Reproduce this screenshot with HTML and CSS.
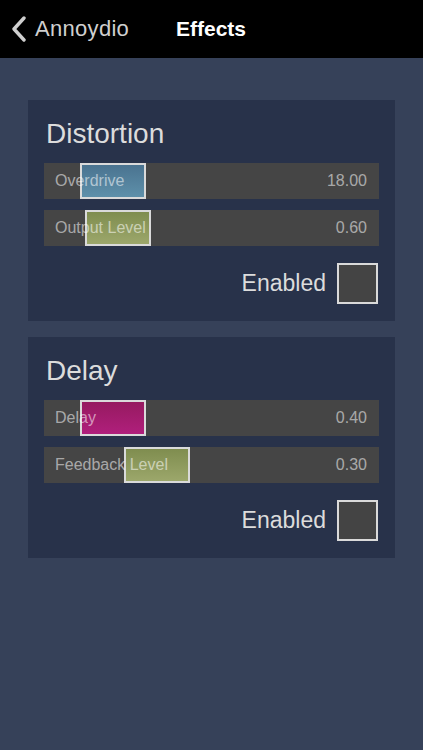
FILE: index.html
```html
<!DOCTYPE html>
<html lang="en">

<head>
  <meta charset="UTF-8">
  <meta name="viewport" content="width=device-width, initial-scale=1.0">
  <title>Effects</title>
  <link rel="stylesheet" href="styles.css">
</head>

<body>
  <header class="navbar">
    <a class="back" href="#">
      <svg class="chevron" width="16" height="26" viewBox="0 0 16 26">
        <polyline points="13,2 3,13 13,24" fill="none" stroke="#cfcfcf" stroke-width="3.4" stroke-linecap="round" stroke-linejoin="round"/>
      </svg>
      <span>Annoydio</span>
    </a>
    <div class="title">Effects</div>
  </header>

  <main class="effects">
    <section class="panel">
      <h2>Distortion</h2>
      <div class="slider">
        <div class="thumb blue" style="left: 36px"></div>
        <span class="label">Overdrive</span>
        <span class="value">18.00</span>
      </div>
      <div class="slider">
        <div class="thumb olive" style="left: 41px"></div>
        <span class="label">Output Level</span>
        <span class="value">0.60</span>
      </div>
      <div class="enabled">
        <span>Enabled</span>
        <div class="checkbox"></div>
      </div>
    </section>

    <section class="panel">
      <h2>Delay</h2>
      <div class="slider">
        <div class="thumb magenta" style="left: 36px"></div>
        <span class="label">Delay</span>
        <span class="value">0.40</span>
      </div>
      <div class="slider">
        <div class="thumb olive" style="left: 80px"></div>
        <span class="label">Feedback Level</span>
        <span class="value">0.30</span>
      </div>
      <div class="enabled">
        <span>Enabled</span>
        <div class="checkbox"></div>
      </div>
    </section>
  </main>
</body>

</html>
```

FILE: styles.css
```css
body {
  margin: 0;
  background: #364159;
  font-family: "Liberation Sans", Arial, sans-serif;
  min-height: 750px;
}

.navbar {
  height: 58px;
  background: #000;
  display: flex;
  align-items: center;
  padding-left: 11px;
}

.back {
  display: flex;
  align-items: center;
  gap: 8px;
  color: #cfcfcf;
  text-decoration: none;
  font-size: 22px;
  letter-spacing: 0.3px;
  width: 165px;
}

.chevron {
  display: block;
}

.title {
  color: #fff;
  font-size: 21px;
  font-weight: bold;
}

.effects {
  padding: 42px 28px 0;
  display: flex;
  flex-direction: column;
  gap: 16px;
}

.panel {
  background: #28324a;
  padding: 16px 16px 17px;
  display: flex;
  flex-direction: column;
}

.panel h2 {
  margin: 2px 0 13px 2px;
  font-size: 28px;
  line-height: 32px;
  font-weight: normal;
  color: #dcdcdc;
}

.slider {
  position: relative;
  height: 36px;
  background: #454545;
  display: flex;
  justify-content: space-between;
  align-items: center;
  padding: 0 12px 0 11px;
  margin-bottom: 11px;
  font-size: 16px;
  color: rgba(255, 255, 255, 0.55);
}

.slider + .slider {
  margin-bottom: 0;
}

.slider span {
  position: relative;
}

.thumb {
  position: absolute;
  top: 0;
  width: 66px;
  height: 36px;
  box-sizing: border-box;
  border: 2px solid #dadada;
}

.thumb.blue {
  background: linear-gradient(#4a7390, #5e90aa);
}

.thumb.olive {
  background: linear-gradient(#7f8d4f, #9ca76b);
}

.thumb.magenta {
  background: linear-gradient(#961a60, #b01f7c);
}

.enabled {
  display: flex;
  justify-content: flex-end;
  align-items: center;
  gap: 11px;
  margin-top: 17px;
  padding-right: 1px;
  font-size: 23px;
  color: #dcdcdc;
}

.checkbox {
  width: 41px;
  height: 41px;
  box-sizing: border-box;
  border: 2px solid #dadada;
  background: #444;
}
```
